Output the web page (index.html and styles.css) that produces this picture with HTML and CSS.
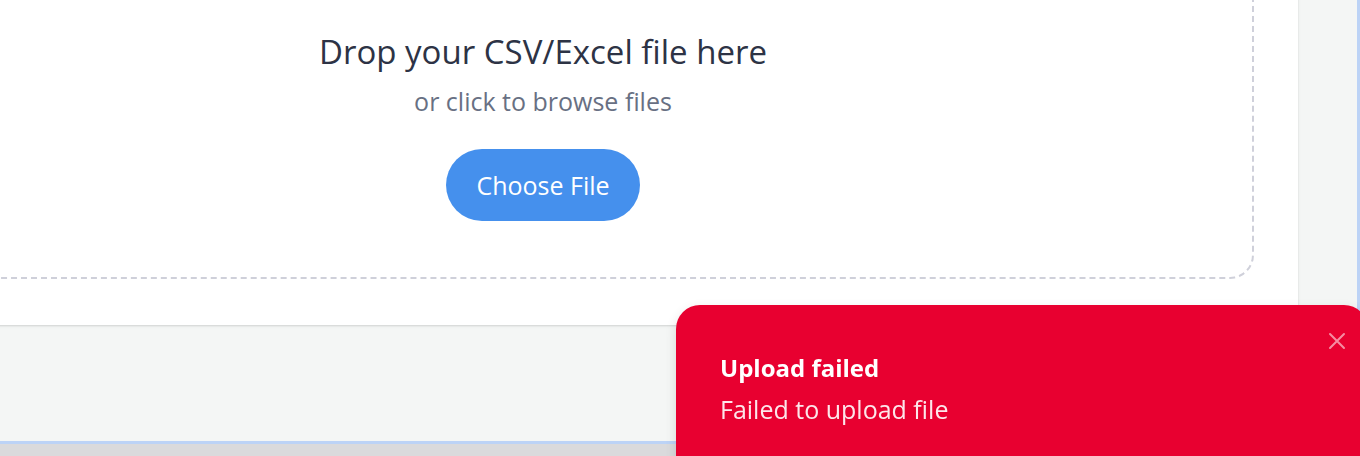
FILE: index.html
```html
<!DOCTYPE html>
<html lang="en">
<head>
<meta charset="utf-8">
<title>Upload</title>
<link rel="stylesheet" href="styles.css">
</head>
<body>
<div class="app">
  <div class="card">
    <div class="dropzone">
      <h2 class="drop-title">Drop your CSV/Excel file here</h2>
      <p class="drop-sub">or click to browse files</p>
      <button class="choose-btn" type="button">Choose File</button>
    </div>
  </div>
</div>
<div class="toast" role="alert">
  <button class="toast-close" type="button" aria-label="Close">
    <svg width="18" height="18" viewBox="0 0 18 18" fill="none" stroke="currentColor" stroke-width="2" stroke-linecap="round"><path d="M2 2L16 16M16 2L2 16"/></svg>
  </button>
  <div class="toast-title">Upload failed</div>
  <div class="toast-desc">Failed to upload file</div>
</div>
</body>
</html>
```
FILE: styles.css
```css
html, body {
  margin: 0;
  padding: 0;
}
body {
  width: 1360px;
  height: 456px;
  overflow: hidden;
  font-family: "Open Sans", "Noto Sans", sans-serif;
  background: linear-gradient(#cfcfd1, #dadadc 12px);
}
.app {
  width: 1357px;
  height: 441px;
  background: #f4f6f5;
  border-right: 3px solid #bcd3f6;
  border-bottom: 3px solid #bcd3f6;
  overflow: hidden;
}
.card {
  margin: -100px 59px 0 -212px;
  padding: 44px 44px 46px;
  background: #ffffff;
  border-radius: 16px;
  box-shadow: 0 1px 3px rgba(0, 0, 0, 0.10), 0 1px 2px rgba(0, 0, 0, 0.06);
}
.dropzone {
  border: 2px dashed #cfd0da;
  border-radius: 24px;
  padding: 85px 0 56px;
  display: flex;
  flex-direction: column;
  align-items: center;
  text-align: center;
}
.drop-title {
  margin: 0;
  font-size: 33px;
  line-height: 42px;
  font-weight: 400;
  color: #2d3345;
}
.drop-sub {
  margin: 13px 0 0;
  font-size: 25px;
  line-height: 30px;
  color: #687083;
}
.choose-btn {
  margin-top: 33px;
  height: 72px;
  width: 194px;
  padding: 0;
  border: none;
  border-radius: 36px;
  background: #4590ed;
  color: #ffffff;
  font-family: inherit;
  font-size: 25px;
}
.toast {
  position: fixed;
  left: 676px;
  top: 305px;
  width: 692px;
  height: 200px;
  box-sizing: border-box;
  padding: 46px 44px;
  background: #e80030;
  border-radius: 24px;
  color: #ffffff;
  box-shadow: 0 4px 12px rgba(0, 0, 0, 0.12);
}
.toast-close {
  position: absolute;
  top: 27px;
  right: 22px;
  padding: 0;
  border: none;
  background: none;
  color: rgba(255, 255, 255, 0.55);
  line-height: 0;
}
.toast-title {
  font-size: 24px;
  line-height: 33px;
  font-weight: 700;
}
.toast-desc {
  margin-top: 9px;
  font-size: 25px;
  line-height: 33px;
  color: rgba(255, 255, 255, 0.9);
}
```
